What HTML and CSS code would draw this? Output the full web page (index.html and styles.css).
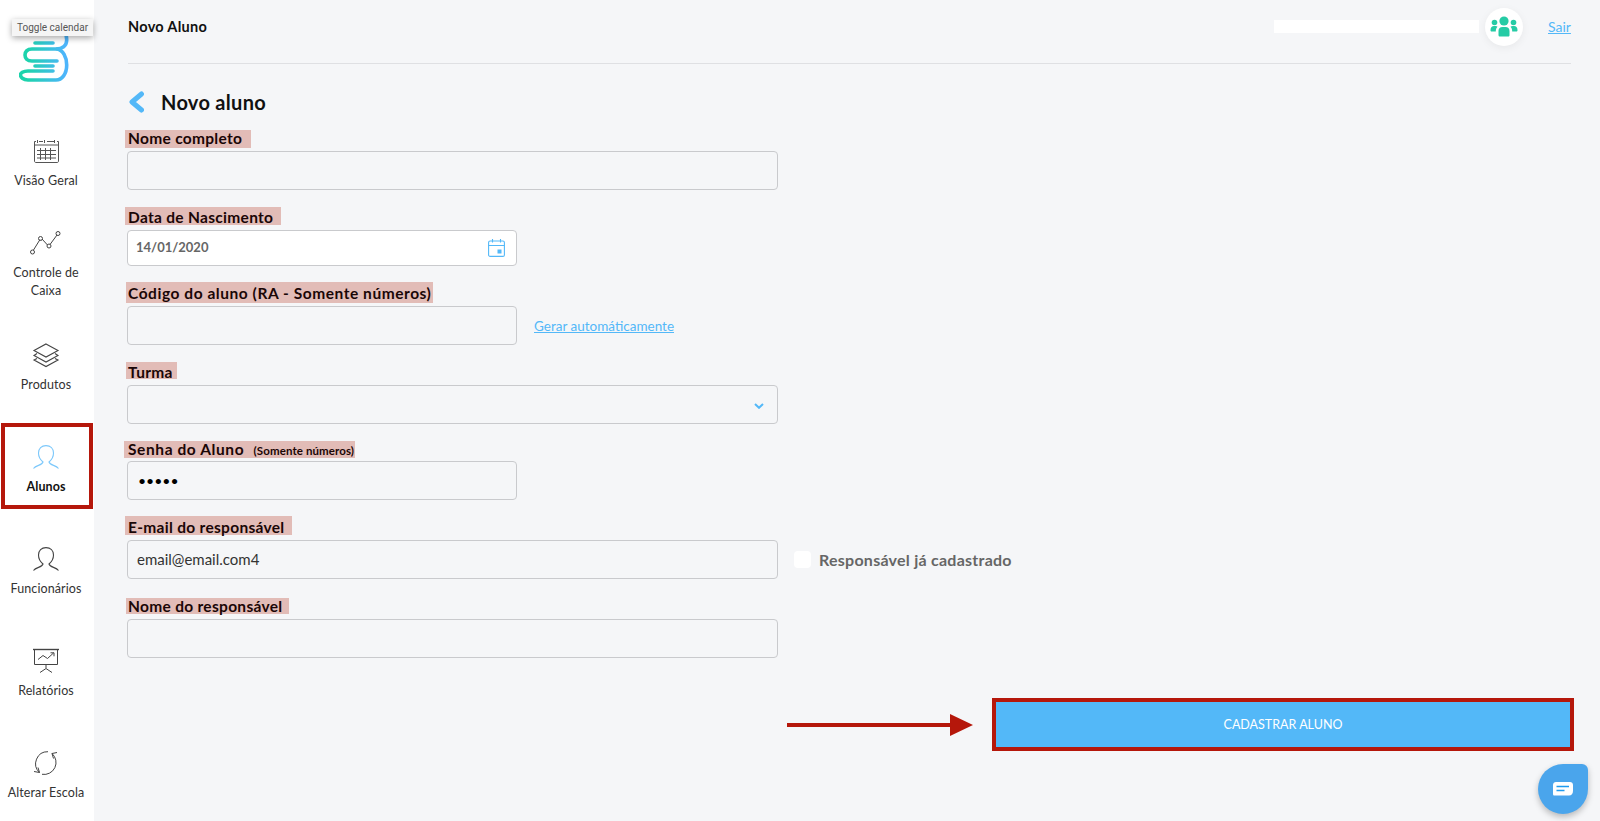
FILE: index.html
```html
<!DOCTYPE html>
<html lang="pt-BR">
<head>
<meta charset="utf-8">
<title>Novo Aluno</title>
<link rel="stylesheet" href="styles.css">
</head>
<body>
<div class="app">
  <aside class="sidebar">
    <div class="logo-wrap">
      <svg class="logo" viewBox="0 0 50 62" fill="none" aria-hidden="true">
        <defs>
          <linearGradient id="lg" gradientUnits="userSpaceOnUse" x1="8" y1="0" x2="46" y2="0">
            <stop offset="0" stop-color="#1dd3ac"/>
            <stop offset="1" stop-color="#4db5fb"/>
          </linearGradient>
        </defs>
        <g stroke="url(#lg)" stroke-width="3.600" stroke-linecap="round">
          <path d="M16 1H37C44 1 47.700 9 47.700 16C47.700 22 43 25 37 25H13C8 25 6 28 6 31C6 34 8 37 13 37H38"/>
          <path d="M16 19H34"/>
          <path d="M38 25C44 26 47.700 33 47.700 41C47.700 50 43 56 37 56H9C4 56 1.500 53 1.500 51C1.500 49 4 47 9 47H34"/>
          <path d="M16 42H34"/>
        </g>
      </svg>
      <div class="tooltip">Toggle calendar</div>
    </div>
    <nav class="nav">
      <a class="nav-item">
        <svg class="nav-icon" viewBox="0 0 26 24" fill="none" stroke="#555" stroke-width="1">
          <path d="M3 2.500H1.500V22C1.500 23 2 23.500 3 23.500H24C25 23.500 25.500 23 25.500 22V2.500H24M6 2.500H10M14 2.500H21M4.500 1V4M11.500 1V4M21.500 1V4M1.500 6H25.500M4 11.500H23M4 15.500H23M4 19H23M7.500 9V21M12.500 9V21M17.500 9V21"/>
        </svg>
        <span class="nav-label">Visão Geral</span>
      </a>
      <a class="nav-item nav-item-wrap">
        <svg class="nav-icon" viewBox="0 0 32 24" fill="none" stroke="#444" stroke-width="1">
          <path d="M3.500 19L10 8.500M12 8L17.500 14M20 13.500L27 4"/>
          <circle cx="2.500" cy="21" r="2"/><circle cx="10.500" cy="7.500" r="2"/><circle cx="19" cy="15" r="2"/><circle cx="28" cy="2.500" r="2"/>
        </svg>
        <span class="nav-label">Controle de Caixa</span>
      </a>
      <a class="nav-item">
        <svg class="nav-icon" viewBox="0 0 26 24" fill="none" stroke="#444" stroke-width="1.100">
          <path d="M13 1L25 7.500L13 14L1 7.500Z"/>
          <path d="M4 10.500L1 12.500L13 19L25 12.500L22 10.500"/>
          <path d="M4 15.500L1 17L13 23.500L25 17L22 15.500"/>
        </svg>
        <span class="nav-label">Produtos</span>
      </a>
      <a class="nav-item nav-item-active">
        <svg class="nav-icon" viewBox="0 0 26 24" fill="none" stroke="#7cc8fb" stroke-width="1.100">
          <path d="M0.500 23.500C3 20 9 20.500 10 17C7 14.500 5.500 11 5.500 8C5.500 3.500 8.500 0.600 13 0.600C17.500 0.600 20.500 3.500 20.500 8C20.500 11 19 14.500 16 17C17 20.500 23 20 25.500 23.500"/>
        </svg>
        <span class="nav-label">Alunos</span>
      </a>
      <a class="nav-item">
        <svg class="nav-icon" viewBox="0 0 26 24" fill="none" stroke="#444" stroke-width="1.100">
          <path d="M0.500 23.500C3 20 9 20.500 10 17C7 14.500 5.500 11 5.500 8C5.500 3.500 8.500 0.600 13 0.600C17.500 0.600 20.500 3.500 20.500 8C20.500 11 19 14.500 16 17C17 20.500 23 20 25.500 23.500"/>
        </svg>
        <span class="nav-label">Funcionários</span>
      </a>
      <a class="nav-item">
        <svg class="nav-icon" viewBox="0 0 26 24" fill="none" stroke="#444" stroke-width="1">
          <path d="M0 0.500H26" stroke-width="1.400"/>
          <path d="M1.500 1V15.500H24.500V1"/>
          <path d="M5 10.500L10 6.500L14.500 9.500L20.500 4M17.500 3.800H21V7.300"/>
          <path d="M13 16V19M7 23.500L13 19.500L19 23.500"/>
        </svg>
        <span class="nav-label">Relatórios</span>
      </a>
      <a class="nav-item">
        <svg class="nav-icon" viewBox="0 0 26 24" fill="none" stroke="#444" stroke-width="1">
          <path d="M6.500 21.500A12 12 0 0 1 15 0.700"/>
          <path d="M1 20.500L6.500 21.500L5 16.500"/>
          <path d="M19 2.500A12 12 0 0 1 9 23.300"/>
          <path d="M24 1.500L19 2.500L20.500 7.500"/>
        </svg>
        <span class="nav-label">Alterar Escola</span>
      </a>
    </nav>
  </aside>

  <main class="main">
    <header class="topbar">
      <div class="topbar-title">Novo Aluno</div>
      <div class="topbar-user">
        <div class="user-name"></div>
        <div class="avatar">
          <svg viewBox="0 0 28 22" class="avatar-icon" fill="#25cba5" aria-hidden="true">
            <circle cx="14" cy="5" r="4.600"/>
            <circle cx="4.500" cy="6.500" r="2.800"/>
            <circle cx="23.500" cy="6.500" r="2.800"/>
            <path d="M8.500 15C8.500 12.500 10 11 12.500 11H15.500C18 11 19.500 12.500 19.500 15V19C19.500 20 19 20.500 18 20.500H10C9 20.500 8.500 20 8.500 19Z"/>
            <path d="M0.500 14C0.500 11.500 2 10 4 10H5.500C6.300 10 7 10.300 7.500 10.800C6.300 12 5.800 13.500 5.800 15.500H1.500C1 15.500 0.500 15 0.500 14.500Z"/>
            <path d="M27.500 14C27.500 11.500 26 10 24 10H22.500C21.700 10 21 10.300 20.500 10.800C21.700 12 22.200 13.500 22.200 15.500H26.500C27 15.500 27.500 15 27.500 14.500Z"/>
          </svg>
        </div>
        <a class="logout">Sair</a>
      </div>
    </header>

    <div class="page-title">
      <svg class="back" viewBox="0 0 15 22" fill="none" stroke="#53b8f8" stroke-width="5" stroke-linecap="round" stroke-linejoin="round" aria-hidden="true">
        <path d="M12.500 3L3 11L12.500 19"/>
      </svg>
      <h1>Novo aluno</h1>
    </div>

    <form class="form">
      <div class="field">
        <div class="field-head"><label class="mark mark-name">Nome completo</label></div>
        <input class="input input-wide" type="text">
      </div>
      <div class="field">
        <div class="field-head"><label class="mark mark-birth">Data de Nascimento</label></div>
        <div class="date-wrap">
          <input class="input input-narrow input-date" type="text" value="14/01/2020">
          <svg class="date-icon" viewBox="0 0 17 18" fill="none" stroke="#53b8f8" stroke-width="1.100" aria-hidden="true">
            <rect x="0.600" y="2" width="15.800" height="15.400" rx="1.500"/>
            <path d="M0.600 6.500H16.400M4.500 0V3.500M12.500 0V3.500"/>
            <rect x="9.500" y="10.500" width="4" height="4" fill="#53b8f8" stroke="none"/>
          </svg>
        </div>
      </div>
      <div class="field">
        <div class="field-head"><label class="mark mark-code">Código do aluno (RA - Somente números)</label></div>
        <div class="field-row">
          <input class="input input-narrow" type="text">
          <a class="gen-link">Gerar automáticamente</a>
        </div>
      </div>
      <div class="field field-tight">
        <div class="field-head"><label class="mark mark-class">Turma</label></div>
        <div class="select-wrap">
          <select class="input input-wide select"><option></option></select>
          <svg class="select-icon" viewBox="0 0 10 6" fill="none" stroke="#53b8f8" stroke-width="2" aria-hidden="true">
            <path d="M1 1L5 4.800L9 1"/>
          </svg>
        </div>
      </div>
      <div class="field">
        <div class="field-head"><label class="mark mark-pass">Senha do Aluno <small class="hint">(Somente números)</small></label></div>
        <input class="input input-narrow input-pass" type="password" value="12345">
      </div>
      <div class="field">
        <div class="field-head"><label class="mark mark-email">E-mail do responsável</label></div>
        <div class="field-row">
          <input class="input input-wide input-email" type="text" value="email@email.com4">
          <div class="check-row">
            <span class="check"></span>
            <span class="check-label">Responsável já cadastrado</span>
          </div>
        </div>
      </div>
      <div class="field">
        <div class="field-head"><label class="mark mark-guardian">Nome do responsável</label></div>
        <input class="input input-wide" type="text">
      </div>
    </form>

    <div class="actions">
      <svg class="arrow" viewBox="0 0 186 24" aria-hidden="true">
        <path d="M0 10H163V1L186 12L163 23V14H0Z" fill="#b5170b"/>
      </svg>
      <button class="submit" type="button">CADASTRAR ALUNO</button>
    </div>
  </main>
</div>

<div class="chat">
  <svg viewBox="0 0 20 14" class="chat-icon" aria-hidden="true">
    <path d="M3 0H17C18.700 0 20 1.300 20 3V9C20 11.500 18.500 13.500 16 13.500H1.500C0.500 13.500 0 13 0 12V3C0 1.300 1.300 0 3 0Z" fill="#fff"/>
    <path d="M3.500 4.500H16M3.500 8.500H11.500" stroke="#1e9bf0" stroke-width="1.400" fill="none"/>
  </svg>
</div>
</body>
</html>
```

FILE: styles.css
```css
* { box-sizing: border-box; }
html, body { margin: 0; height: 821px; overflow: hidden; }
body { background: #f5f6f8; font-family: "Lato", "Noto Sans", sans-serif; color: #111; }

.app { display: flex; height: 821px; }

.sidebar { width: 94px; flex: none; background: #fff; }
.logo-wrap { position: relative; height: 117px; padding: 24px 0 0 19px; }
.logo { display: block; width: 50px; height: 62px; }
.tooltip {
  position: absolute; left: 12px; top: 19px; width: 81px; height: 17px;
  background: #f5f5f5; box-shadow: 0 2px 6px rgba(0,0,0,.35);
  font: 10px/17px "Roboto", sans-serif; color: #555; text-align: center; white-space: nowrap;
}

.nav { display: flex; flex-direction: column; gap: 16px; }
.nav-item {
  display: flex; flex-direction: column; align-items: center;
  width: 92px; min-height: 86px; margin-left: 1px;
  border: 4px solid transparent; padding: 18px 2px 9px 0;
}
.nav-item-wrap { margin-top: -10px; margin-bottom: -8px; }
.nav-item-active { border-color: #b5170b; }
.nav-icon { display: block; height: 24px; width: 26px; flex: none; overflow: visible; }
.nav-item-wrap .nav-icon { width: 32px; }
.nav-label { margin-top: 9px; font-size: 12.500px; line-height: 18px; letter-spacing: .1px; text-align: center; color: #333; }
.nav-item-active .nav-label { font-weight: 700; color: #111; }

.main { flex: 1; min-width: 0; padding: 0 26px 0 33px; }

.topbar {
  display: flex; justify-content: space-between; align-items: center;
  height: 64px; margin: 0 3px 0 1px; padding-bottom: 10px;
  border-bottom: 1px solid #dfe0e3;
}
.topbar-title { font-size: 14.500px; letter-spacing: .3px; font-weight: 700; color: #111; }
.topbar-user { display: flex; align-items: center; }
.user-name { width: 205px; height: 13px; background: #fff; margin-right: 6px; }
.avatar {
  width: 38px; height: 38px; border-radius: 50%; background: #fff;
  box-shadow: 0 2px 8px rgba(0,0,0,.06);
  display: flex; align-items: center; justify-content: center; margin-right: 25px;
}
.avatar-icon { width: 28px; height: 22px; }
.logout { font-size: 14px; color: #53b8f8; text-decoration: underline; width: 23px; }

.page-title { display: flex; align-items: center; height: 26px; margin: 25px 0 12px 2px; }
.back { width: 15px; height: 22px; margin-right: 17px; flex: none; }
.page-title h1 { margin: 0; font-size: 20px; line-height: 26px; letter-spacing: .3px; font-weight: 700; color: #111; }

.form { display: flex; flex-direction: column; gap: 16px; }
.field-tight { margin-bottom: -3px; }
.field-head { height: 24px; padding: 3px 0 0 1px; }
.field-row { display: flex; align-items: center; }

.mark {
  position: relative; z-index: 0; display: block; width: max-content;
  font-size: 15.500px; line-height: 16px; letter-spacing: .3px; font-weight: 700; color: #1a0606;
}
.mark::before {
  content: ""; position: absolute; z-index: -1; background: #e2bcb7;
  top: calc(-1 * var(--t)); bottom: calc(-1 * var(--b)); left: var(--l); width: var(--w);
}
.mark-name { --t: 0px; --b: 2px; --l: -3px; --w: 126px; }
.mark-birth { --t: 2px; --b: 0px; --l: -3px; --w: 156px; }
.mark-code { --t: 3px; --b: 2px; --l: -2px; --w: 307px; letter-spacing: .55px; }
.mark-class { --t: 2px; --b: -1px; --l: -2px; --w: 51px; }
.mark-pass { --t: 0px; --b: -1px; --l: -4px; --w: 231px; margin-top: 1px; letter-spacing: .6px; }
.mark-email { --t: 3px; --b: 0px; --l: -3px; --w: 167px; }
.mark-guardian { --t: 0px; --b: 0px; --l: -2px; --w: 163px; }
.hint { font-size: 11.500px; margin-left: 5px; letter-spacing: .1px; }

.input {
  display: block; height: 39px; padding: 0 9px; background: transparent;
  border: 1px solid #c9cacd; border-radius: 4px; outline: none;
  font-family: inherit; font-size: 14px; color: #333;
}
.input-wide { width: 651px; }
.input-narrow { width: 390px; }
.input-date { height: 36px; padding-bottom: 3px; background: #fff; font-size: 13px; font-weight: 700; color: #666; padding-left: 8px; }
.input-pass { color: #000; padding-left: 10px; }
.input-email { padding-left: 9px; font-size: 15px; padding-bottom: 2px; }

.date-wrap { position: relative; width: 390px; }
.date-icon { position: absolute; left: 361px; top: 9px; width: 17px; height: 18px; }
.select-wrap { position: relative; width: 651px; }
.select { appearance: none; -webkit-appearance: none; }
.select-icon { position: absolute; left: 627px; top: 18px; width: 10px; height: 6px; }

.gen-link { margin-left: 17px; font-size: 13.500px; color: #53b8f8; text-decoration: underline; }
.check-row { display: flex; align-items: center; margin-left: 16px; }
.check { width: 17px; height: 17px; border-radius: 4px; background: #fff; margin-right: 8px; }
.check-label { font-size: 16px; letter-spacing: .25px; font-weight: 700; color: #666; }

.actions { display: flex; justify-content: flex-end; align-items: center; margin-top: 40px; }
.arrow { width: 186px; height: 24px; margin-right: 19px; }
.submit {
  width: 582px; height: 53px; background: #53b8f8; border: 4px solid #b5170b;
  color: #fff; font-family: inherit; font-size: 12.500px; letter-spacing: 0;
}

.chat {
  position: fixed; left: 1538px; top: 764px; width: 50px; height: 50px;
  background: #4aa5ec; border-radius: 50% 6px 50% 50%;
  box-shadow: 0 3px 6px rgba(0,0,0,.25);
  display: flex; align-items: center; justify-content: center;
}
.chat-icon { width: 20px; height: 14px; }
```
